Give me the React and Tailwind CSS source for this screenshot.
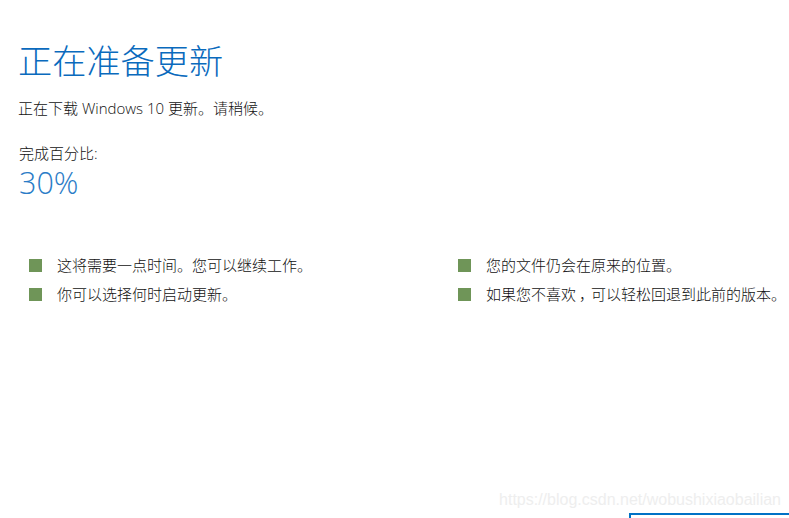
import React from 'react';

const font = "font-['Open_Sans','Noto_Sans_CJK_SC',sans-serif]";

function Point({ children }) {
  return (
    <li className="flex items-center h-[29px]">
      <span className="w-[13px] h-[13px] bg-[#6f9558] shrink-0" />
      <span className="ml-[15px] whitespace-nowrap font-light">{children}</span>
    </li>
  );
}

export default function App() {
  return (
    <div className={`relative w-[789px] h-[518px] overflow-hidden bg-white text-[15px] text-[#111111] ${font}`}>
      <div className="pl-[18px] pt-[39px]">
        <h1 className="text-[34.2px] leading-[44px] font-light text-[#0a6abd]">正在准备更新</h1>
        <p className="mt-[14px] leading-[22px] font-light">正在下载 Windows 10 更新。请稍候。</p>
        <p className="mt-[23px] pl-px leading-[22px] font-light">完成百分比:</p>
        <p className="pl-px text-[30.5px] leading-[36px] font-light text-[#2a7cc7]">30%</p>
      </div>

      <div className="grid grid-cols-[429px_1fr] pl-[29px] mt-[51px]">
        <ul>
          <Point>这将需要一点时间。您可以继续工作。</Point>
          <Point>你可以选择何时启动更新。</Point>
        </ul>
        <ul>
          <Point>您的文件仍会在原来的位置。</Point>
          <Point>
            如果您不喜<span className="tracking-[3px]">欢</span><span className="tracking-[-3px]">，</span>可以轻松回退到此前的版本。
          </Point>
        </ul>
      </div>

      <div className="flex justify-end mt-[204px] -mr-[4px]">
        <div className="w-[164px] h-[40px] border-2 border-[#0072c6]" />
      </div>

      <div className="absolute right-[8px] top-[490px] text-[16px] leading-[20px] text-[#eeeeee] font-['Liberation_Sans',sans-serif]">
        https://blog.csdn.net/wobushixiaobailian
      </div>
    </div>
  );
}
